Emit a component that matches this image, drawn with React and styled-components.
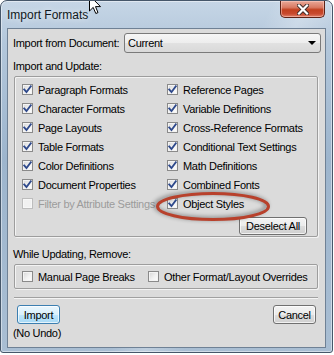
import React from "react";
import styled, { createGlobalStyle } from "styled-components";

const GlobalStyle = createGlobalStyle`
  body {
    margin: 0;
    background: #ffffff;
    font-family: "Liberation Sans", Arial, sans-serif;
  }
`;

const Window = styled.div`
  position: relative;
  width: 333px;
  height: 353px;
  box-sizing: border-box;
  border: 1px solid #46576a;
  border-radius: 7px 7px 3px 3px;
  background:
    linear-gradient(115deg, rgba(255, 255, 255, 0) 55%, rgba(255, 255, 255, 0.25) 62%, rgba(255, 255, 255, 0) 70%),
    linear-gradient(180deg, #c6d6e6 0%, #b3c7db 12%, #9db5cd 45%, #a9bed3 100%);
  box-shadow: inset 0 0 0 1px rgba(255, 255, 255, 0.45);
  display: flex;
  flex-direction: column;
  overflow: hidden;
`;

const TitleBar = styled.div`
  height: 27px;
  flex: none;
  display: flex;
  justify-content: space-between;
  align-items: flex-start;
  padding-left: 6px;
`;

const Title = styled.div`
  margin-top: 7px;
  font-size: 12px;
  line-height: 15px;
  color: #101820;
  text-shadow: 0 0 6px rgba(255, 255, 255, 0.9);
`;

const CloseButton = styled.div`
  width: 45px;
  height: 17px;
  margin-right: 7px;
  box-sizing: border-box;
  border: 1px solid #5e2216;
  border-top: none;
  border-radius: 0 0 5px 5px;
  background: linear-gradient(180deg, #e9a898 0%, #d97a63 40%, #c2401f 55%, #c84a2e 80%, #e0806a 100%);
  box-shadow: inset 0 0 0 1px rgba(255, 210, 200, 0.5);
  display: flex;
  align-items: center;
  justify-content: center;
`;

const Client = styled.div`
  flex: 1;
  margin: 0 6px 4px 6px;
  border: 1px solid #6f8195;
  background: #dbdbdb;
  display: flex;
  flex-direction: column;
  font-size: 11px;
  letter-spacing: -0.3px;
  color: #000;
`;

const DocRow = styled.div`
  display: flex;
  align-items: center;
  justify-content: space-between;
  height: 20px;
  margin-top: 4px;
  padding-left: 5px;
`;

const Select = styled.div`
  width: 197px;
  height: 20px;
  margin-right: 4px;
  box-sizing: border-box;
  border: 1px solid #7a7a7a;
  border-radius: 3px;
  background: linear-gradient(180deg, #f6f6f6 0%, #ededed 50%, #e1e1e1 51%, #d9d9d9 100%);
  display: flex;
  align-items: center;
  justify-content: space-between;
  padding: 0 4px 0 3px;
`;

const Arrow = styled.span`
  width: 0;
  height: 0;
  border-left: 4px solid transparent;
  border-right: 4px solid transparent;
  border-top: 4px solid #000;
`;

const SectionLabel = styled.div`
  margin-top: ${p => p.$top}px;
  padding-left: 5px;
  line-height: 13px;
  height: 13px;
`;

const GroupBox = styled.div`
  margin: 3px 7px 0 6px;
  border: 1px solid #9d9d9d;
  border-radius: 2px;
  box-shadow: inset 1px 1px 0 #f3f3f3, 1px 1px 0 #f3f3f3;
  display: flex;
  flex-direction: column;
  padding: ${p => p.$pad};
`;

const CheckGrid = styled.div`
  display: grid;
  grid-template-columns: 145px 1fr;
  grid-auto-rows: 19px;
`;

const CheckRow = styled.div`
  display: flex;
  align-items: center;
  gap: 5px;
  width: ${p => (p.$width ? `${p.$width}px` : "auto")};
  color: ${p => (p.$disabled ? "#9c9c9c" : "#000")};
  white-space: nowrap;
`;

const Box = styled.span`
  width: 11px;
  height: 11px;
  flex: none;
  box-sizing: border-box;
  border: 1px solid ${p => (p.$disabled ? "#bdbdbd" : "#8a8a8a")};
  background: ${p =>
    p.$disabled
      ? "#f1f1f1"
      : "linear-gradient(135deg, #d6d6d6 0%, #f2f2f2 55%, #ffffff 100%)"};
  box-shadow: inset 0 0 0 1px ${p => (p.$disabled ? "#f7f7f7" : "#f4f4f4")};
  display: flex;
  align-items: center;
  justify-content: center;
`;

const ButtonBar = styled.div`
  display: flex;
  justify-content: flex-end;
  margin-top: 4px;
  padding-right: 10px;
`;

const Button = styled.div`
  height: ${p => p.$h || 19}px;
  box-sizing: border-box;
  padding: 0 ${p => p.$px || 4}px;
  min-width: ${p => p.$w || 0}px;
  border: 1px solid ${p => (p.$default ? "#3c7fb1" : "#707070")};
  border-radius: 3px;
  background: ${p =>
    p.$default
      ? "linear-gradient(180deg, #eaf6fd 0%, #d9f0fc 50%, #bee6fd 51%, #a7d9f5 100%)"
      : "linear-gradient(180deg, #f3f3f3 0%, #ebebeb 50%, #dddddd 51%, #cfcfcf 100%)"};
  box-shadow: inset 0 0 0 1px rgba(255, 255, 255, 0.7);
  display: flex;
  align-items: center;
  justify-content: center;
  font-size: 11px;
`;

const RemoveRow = styled.div`
  display: flex;
  align-items: center;
  height: 23px;
  padding-left: 7px;
`;

const Separator = styled.div`
  margin: 8px 7px 0 6px;
  height: 1px;
  background: #a0a0a0;
  border-bottom: 1px solid #f4f4f4;
`;

const Footer = styled.div`
  display: flex;
  justify-content: space-between;
  margin-top: 6px;
  padding: 0 9px;
`;

const Note = styled.div`
  margin-top: 3px;
  padding-left: 5px;
  line-height: 13px;
`;

const Highlight = styled.svg`
  position: absolute;
  left: 150px;
  top: 186px;
  overflow: visible;
  filter: drop-shadow(-2px -1px 2px rgba(0, 0, 0, 0.45));
  pointer-events: none;
`;

const Cursor = styled.svg`
  position: absolute;
  left: 88px;
  top: -6px;
  pointer-events: none;
`;

const CheckMark = () => (
  <svg width="9" height="9" viewBox="0 0 9 9">
    <path d="M1.2 4.4 L3.5 7 L7.8 1.3" fill="none" stroke="#2f4a8c" strokeWidth="1.8" strokeLinecap="square" />
  </svg>
);

const Check = ({ label, checked, disabled, width }) => (
  <CheckRow $disabled={disabled} $width={width}>
    <Box $disabled={disabled}>{checked && <CheckMark />}</Box>
    <span>{label}</span>
  </CheckRow>
);

const items = [
  ["Paragraph Formats", true],
  ["Reference Pages", true],
  ["Character Formats", true],
  ["Variable Definitions", true],
  ["Page Layouts", true],
  ["Cross-Reference Formats", true],
  ["Table Formats", true],
  ["Conditional Text Settings", true],
  ["Color Definitions", true],
  ["Math Definitions", true],
  ["Document Properties", true],
  ["Combined Fonts", true],
  ["Filter by Attribute Settings", false, true],
  ["Object Styles", true],
];

export default function App() {
  return (
    <>
      <GlobalStyle />
      <Window>
        <TitleBar>
          <Title>Import Formats</Title>
          <CloseButton>
            <svg width="12" height="11" viewBox="0 0 12 11">
              <path d="M2 1.5 L10 9.5 M10 1.5 L2 9.5" stroke="#3a2a28" strokeWidth="4" strokeLinecap="square" />
              <path d="M2 1.5 L10 9.5 M10 1.5 L2 9.5" stroke="#ffffff" strokeWidth="2.2" strokeLinecap="square" />
            </svg>
          </CloseButton>
        </TitleBar>
        <Client>
          <DocRow>
            <span>Import from Document:</span>
            <Select>
              <span>Current</span>
              <Arrow />
            </Select>
          </DocRow>
          <SectionLabel $top={7}>Import and Update:</SectionLabel>
          <GroupBox $pad="3px 0 1px 7px">
            <CheckGrid>
              {items.map(([label, checked, disabled]) => (
                <Check key={label} label={label} checked={checked} disabled={disabled} />
              ))}
            </CheckGrid>
            <ButtonBar>
              <Button $h={18} $w={68}>Deselect All</Button>
            </ButtonBar>
          </GroupBox>
          <SectionLabel $top={11}>While Updating, Remove:</SectionLabel>
          <GroupBox $pad="0">
            <RemoveRow>
              <Check label="Manual Page Breaks" width={126} />
              <Check label="Other Format/Layout Overrides" />
            </RemoveRow>
          </GroupBox>
          <Separator />
          <Footer>
            <Button $default $w={43}>Import</Button>
            <Button $w={43}>Cancel</Button>
          </Footer>
          <Note>(No Undo)</Note>
        </Client>
        <Highlight width="125" height="40">
          <ellipse cx="62" cy="19.5" rx="55.5" ry="13" fill="none" stroke="#b8412c" strokeWidth="3" />
        </Highlight>
        <Cursor width="13" height="20" viewBox="0 0 13 20">
          <path d="M0.5 0.5 L0.5 16 L4.2 12.4 L6.8 18.5 L9 17.6 L6.5 11.6 L11.5 11.6 Z" fill="#ffffff" stroke="#000" strokeWidth="1" strokeLinejoin="miter" />
        </Cursor>
      </Window>
    </>
  );
}
